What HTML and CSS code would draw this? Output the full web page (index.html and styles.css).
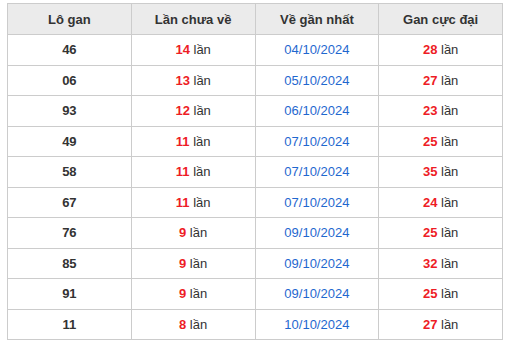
FILE: index.html
```html
<!DOCTYPE html>
<html lang="vi">
<head>
    <meta charset="UTF-8">
    <meta name="viewport" content="width=device-width, initial-scale=1.0">
    <title>Thống kê lô gan</title>
    <link rel="stylesheet" href="styles.css">
</head>
<body>
    <div class="wrap">
        <table class="gan-table">
            <thead>
                <tr>
                    <th>Lô gan</th>
                    <th>Lần chưa về</th>
                    <th>Về gần nhất</th>
                    <th>Gan cực đại</th>
                </tr>
            </thead>
            <tbody>
                <tr><td class="num">46</td><td><b class="red">14</b> lần</td><td class="date">04/10/2024</td><td><b class="red">28</b> lần</td></tr>
                <tr><td class="num">06</td><td><b class="red">13</b> lần</td><td class="date">05/10/2024</td><td><b class="red">27</b> lần</td></tr>
                <tr><td class="num">93</td><td><b class="red">12</b> lần</td><td class="date">06/10/2024</td><td><b class="red">23</b> lần</td></tr>
                <tr><td class="num">49</td><td><b class="red">11</b> lần</td><td class="date">07/10/2024</td><td><b class="red">25</b> lần</td></tr>
                <tr><td class="num">58</td><td><b class="red">11</b> lần</td><td class="date">07/10/2024</td><td><b class="red">35</b> lần</td></tr>
                <tr><td class="num">67</td><td><b class="red">11</b> lần</td><td class="date">07/10/2024</td><td><b class="red">24</b> lần</td></tr>
                <tr><td class="num">76</td><td><b class="red">9</b> lần</td><td class="date">09/10/2024</td><td><b class="red">25</b> lần</td></tr>
                <tr><td class="num">85</td><td><b class="red">9</b> lần</td><td class="date">09/10/2024</td><td><b class="red">32</b> lần</td></tr>
                <tr><td class="num">91</td><td><b class="red">9</b> lần</td><td class="date">09/10/2024</td><td><b class="red">25</b> lần</td></tr>
                <tr><td class="num">11</td><td><b class="red">8</b> lần</td><td class="date">10/10/2024</td><td><b class="red">27</b> lần</td></tr>
            </tbody>
        </table>
    </div>
</body>
</html>
```

FILE: styles.css
```css
* {
    margin: 0;
    padding: 0;
    box-sizing: border-box;
}

body {
    background: #fff;
    color: #333;
    font-family: "Liberation Sans", Arial, sans-serif;
    font-size: 13px;
}

.wrap {
    padding: 3px 0 0 7px;
}

.gan-table {
    width: 496px;
    border-collapse: collapse;
    table-layout: fixed;
    text-align: center;
}

.gan-table th,
.gan-table td {
    border: 1px solid #cccccc;
    vertical-align: middle;
}

.gan-table th {
    height: 31px;
    background: #ebebeb;
    font-weight: bold;
    color: #333;
}

.gan-table td {
    height: 30.5px;
}

.num {
    font-weight: bold;
}

.red {
    color: #ee1c25;
}

.date {
    color: #1f68cf;
}
```
